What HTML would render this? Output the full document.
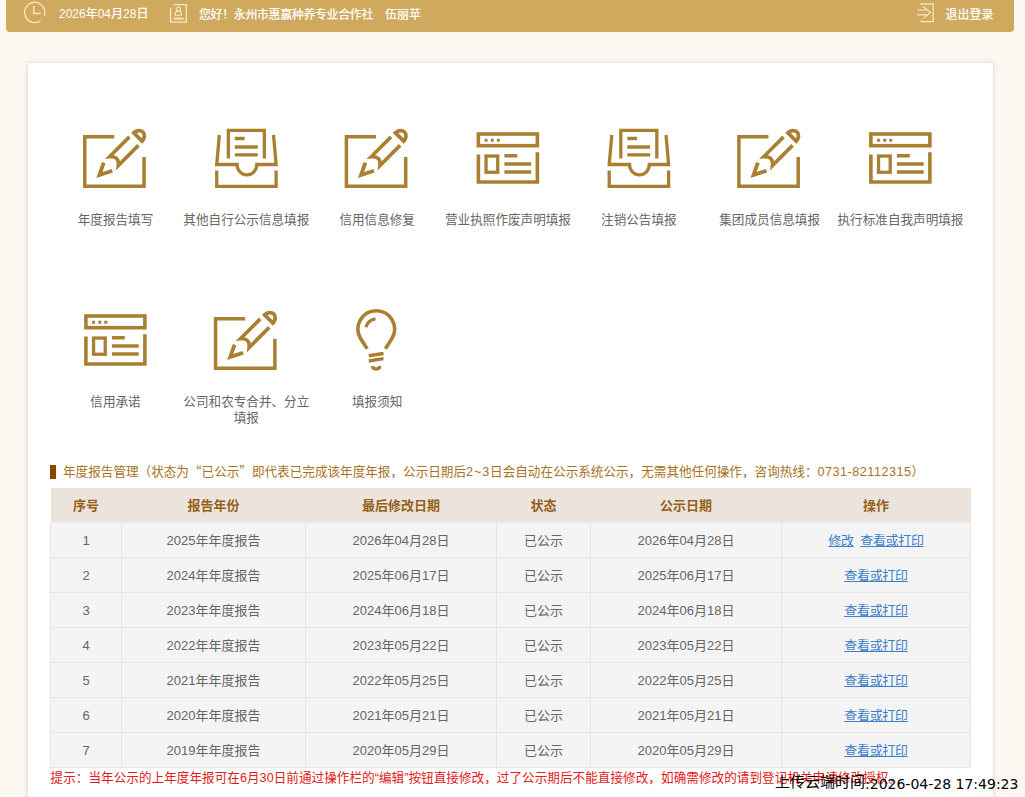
<!DOCTYPE html>
<html lang="zh-CN">
<head>
<meta charset="utf-8">
<title>企业信用信息公示系统</title>
<style>
html,body{margin:0;padding:0;}
body{width:1025px;height:797px;overflow:hidden;position:relative;background:#faf8f0;
 font-family:"Liberation Sans","Noto Sans CJK SC",sans-serif;font-size:13px;color:#666;}
a{color:#3d7fc9;text-decoration:underline;}
.q{font-family:"Noto Sans CJK SC",sans-serif;}
.topbar{position:absolute;left:6px;top:0;width:1008px;height:32px;background:#cfa95e;border-radius:0 0 4px 4px;color:#fff;font-size:12px;line-height:28px;}
.topbar span{position:absolute;top:0;white-space:nowrap;font-weight:500;}
.topbar span.c{top:0.6px;}
.topbar svg{position:absolute;left:0;top:0;}
.card{position:absolute;left:28px;top:63px;width:965px;height:760px;background:#fff;box-shadow:0 0 5px rgba(0,0,0,.16);}
.icons{position:absolute;left:0;top:0;}
.lbl{position:absolute;width:150px;text-align:center;line-height:16px;font-size:12.6px;color:#666;}
.title{position:absolute;left:50px;top:465px;height:14px;line-height:12.5px;border-left:6px solid #8a4500;padding-left:7px;color:#a87220;font-size:12.6px;white-space:nowrap;}
table.grid{position:absolute;left:50px;top:488px;border-collapse:collapse;table-layout:fixed;width:921px;}
table.grid th{height:32px;padding:2px 0 0;vertical-align:middle;line-height:20px;background:#ebe4dd;color:#965f18;font-weight:bold;font-size:13px;}
table.grid td{height:32px;padding:2px 0 0;vertical-align:middle;line-height:20px;background:#f4f4f4;border:1px solid #e5e5e5;text-align:center;font-size:13px;color:#666;}
table.grid tr:nth-child(2) td{border-top-color:#f0ece8;}
table.grid td i{display:inline-block;width:6.5px;}
table.grid td a{letter-spacing:-0.3px;}
.tip{position:absolute;left:50.5px;top:770px;font-size:12.6px;letter-spacing:0.035px;line-height:16px;color:#e02020;white-space:nowrap;}
.stamp{position:absolute;left:775px;top:773px;font-family:"DejaVu Sans","Noto Sans CJK SC",sans-serif;font-size:14px;line-height:20px;color:#000;white-space:nowrap;}
.stamp span{font-size:15px;font-family:"Noto Sans CJK SC",sans-serif;position:relative;top:-1.6px;}
</style>
</head>
<body>
<div class="topbar">
  <svg width="1008" height="32" viewBox="6 0 1008 32" fill="none" stroke="#fbe8c2" stroke-width="1.3">
    <path d="M44.3,15.9 A10.1,10.1 0 1 0 40.6,20.8"/>
    <path d="M33.7,6.1 V13.4 H40.8" stroke-width="1.5"/>
    <path d="M173.8,4.7 H186.3 V22.2 H170.6 V7.9"/>
    <circle cx="178.4" cy="8.9" r="2.1" stroke-width="1.1"/>
    <path d="M175.4,15.2 V13.6 A3,2.6 0 0 1 181.4,13.6 V15.2 Z" stroke-width="1.1"/>
    <rect x="173.7" y="17.3" width="9.7" height="2.5" fill="#f3dcae" stroke="none"/>
    <path d="M921.2,5.2 V3.9 H933.2 V21.7 H921.2 V20.2" stroke-width="1.2"/>
    <path d="M917.2,10 H926.5 M917.2,14.8 H926.5 M923.2,6.8 L930.6,12.5 L923.2,18.4" stroke-width="1.2"/>
  </svg>
  <span style="left:53px">2026年04月28日</span>
  <span class="c" style="left:193px;letter-spacing:-0.4px">您好！永州市惠赢种养专业合作社</span>
  <span class="c" style="left:379px">伍丽苹</span>
  <span class="c" style="left:939.5px">退出登录</span>
</div>
<div class="card"></div>
<svg class="icons" width="1025" height="460" viewBox="0 0 1025 460">
<g transform="translate(83.0,128)" fill="none" stroke="#a98032" stroke-width="3.5" stroke-linecap="butt" stroke-linejoin="miter">
<path d="M31.3,8.85 H1.75 V58.25 H61.05 V28.9"/>
<g transform="translate(13.5,50.4) rotate(-45)" stroke-width="3.6">
<path d="M16.2,-6 L4.4,-0.3 L16.6,5.8" stroke-width="3.8" stroke-miterlimit="10"/>
<path d="M52.6,-6.1 H24.5 Q32,0.3 24.5,6.3 H53"/>
<path d="M58.6,-5.8 V5.8 A7,5.8 0 0 0 58.6,-5.8 Z" stroke-width="3.8"/>
</g>
</g>
<g transform="translate(215.33,128)" fill="none" stroke="#a98032" stroke-width="3.3" stroke-linecap="butt" stroke-linejoin="miter">
<path d="M13,30.4 V2.35 H49 V30.4"/>
<path d="M19.5,10.5 H29.2 M19.5,19 H42.4 M19.5,26.8 H42.4"/>
<path d="M4,7 L1.4,36.5 H21.7 A9.9,10.3 0 0 0 41.5,36.5 H60.8 L58.2,7"/>
<path d="M1.4,42.4 V58.3 H60.8 V42.4"/>
</g>
<g transform="translate(344.66,128)" fill="none" stroke="#a98032" stroke-width="3.5" stroke-linecap="butt" stroke-linejoin="miter">
<path d="M31.3,8.85 H1.75 V58.25 H61.05 V28.9"/>
<g transform="translate(13.5,50.4) rotate(-45)" stroke-width="3.6">
<path d="M16.2,-6 L4.4,-0.3 L16.6,5.8" stroke-width="3.8" stroke-miterlimit="10"/>
<path d="M52.6,-6.1 H24.5 Q32,0.3 24.5,6.3 H53"/>
<path d="M58.6,-5.8 V5.8 A7,5.8 0 0 0 58.6,-5.8 Z" stroke-width="3.8"/>
</g>
</g>
<g transform="translate(476.59,128)" fill="none" stroke="#a98032" stroke-width="3.6" stroke-linecap="butt" stroke-linejoin="miter">
<rect x="1.8" y="6" width="59" height="11.7"/>
<path d="M8,10.8 h3 v3 h-3 z M14.2,10.8 h3 v3 h-3 z M20.2,10.8 h3 v3 h-3 z" fill="#a98032" stroke="none"/>
<path d="M1.8,26.4 V54 H60.8 V24.2"/>
<rect x="9.45" y="28.05" width="11.7" height="16.2" stroke-width="3.3"/>
<path d="M27.8,27.8 H40.7 M27.8,36 H54.6 M27.8,44 H54.6" stroke-width="3.4"/>
</g>
<g transform="translate(607.82,128)" fill="none" stroke="#a98032" stroke-width="3.3" stroke-linecap="butt" stroke-linejoin="miter">
<path d="M13,30.4 V2.35 H49 V30.4"/>
<path d="M19.5,10.5 H29.2 M19.5,19 H42.4 M19.5,26.8 H42.4"/>
<path d="M4,7 L1.4,36.5 H21.7 A9.9,10.3 0 0 0 41.5,36.5 H60.8 L58.2,7"/>
<path d="M1.4,42.4 V58.3 H60.8 V42.4"/>
</g>
<g transform="translate(737.15,128)" fill="none" stroke="#a98032" stroke-width="3.5" stroke-linecap="butt" stroke-linejoin="miter">
<path d="M31.3,8.85 H1.75 V58.25 H61.05 V28.9"/>
<g transform="translate(13.5,50.4) rotate(-45)" stroke-width="3.6">
<path d="M16.2,-6 L4.4,-0.3 L16.6,5.8" stroke-width="3.8" stroke-miterlimit="10"/>
<path d="M52.6,-6.1 H24.5 Q32,0.3 24.5,6.3 H53"/>
<path d="M58.6,-5.8 V5.8 A7,5.8 0 0 0 58.6,-5.8 Z" stroke-width="3.8"/>
</g>
</g>
<g transform="translate(869.08,128)" fill="none" stroke="#a98032" stroke-width="3.6" stroke-linecap="butt" stroke-linejoin="miter">
<rect x="1.8" y="6" width="59" height="11.7"/>
<path d="M8,10.8 h3 v3 h-3 z M14.2,10.8 h3 v3 h-3 z M20.2,10.8 h3 v3 h-3 z" fill="#a98032" stroke="none"/>
<path d="M1.8,26.4 V54 H60.8 V24.2"/>
<rect x="9.45" y="28.05" width="11.7" height="16.2" stroke-width="3.3"/>
<path d="M27.8,27.8 H40.7 M27.8,36 H54.6 M27.8,44 H54.6" stroke-width="3.4"/>
</g>
<g transform="translate(84.1,310)" fill="none" stroke="#a98032" stroke-width="3.6" stroke-linecap="butt" stroke-linejoin="miter">
<rect x="1.8" y="6" width="59" height="11.7"/>
<path d="M8,10.8 h3 v3 h-3 z M14.2,10.8 h3 v3 h-3 z M20.2,10.8 h3 v3 h-3 z" fill="#a98032" stroke="none"/>
<path d="M1.8,26.4 V54 H60.8 V24.2"/>
<rect x="9.45" y="28.05" width="11.7" height="16.2" stroke-width="3.3"/>
<path d="M27.8,27.8 H40.7 M27.8,36 H54.6 M27.8,44 H54.6" stroke-width="3.4"/>
</g>
<g transform="translate(213.83,310)" fill="none" stroke="#a98032" stroke-width="3.5" stroke-linecap="butt" stroke-linejoin="miter">
<path d="M31.3,8.85 H1.75 V58.25 H61.05 V28.9"/>
<g transform="translate(13.5,50.4) rotate(-45)" stroke-width="3.6">
<path d="M16.2,-6 L4.4,-0.3 L16.6,5.8" stroke-width="3.8" stroke-miterlimit="10"/>
<path d="M52.6,-6.1 H24.5 Q32,0.3 24.5,6.3 H53"/>
<path d="M58.6,-5.8 V5.8 A7,5.8 0 0 0 58.6,-5.8 Z" stroke-width="3.8"/>
</g>
</g>
<g transform="translate(344.66,310)" fill="none" stroke="#a98032" stroke-width="3.6" stroke-linecap="butt" stroke-linejoin="round">
<path d="M22.5,38.7 L15.75,28.25 A18.3,18.3 0 1 1 47.45,28.25 L40.7,38.7"/>
<path d="M21.3,17.3 A10.4,10.4 0 0 1 30.9,8.8" stroke-width="3.3"/>
<path d="M24.1,45.7 L38.9,43.5 M24.1,51 L38.9,48.6" stroke-width="3.4"/>
<path d="M27.9,56 Q27.9,59 31.5,59 Q35.1,59 35.1,56" stroke-width="3.3"/>
</g>
</svg>
<div class="lbl" style="left:40.5px;top:212px">年度报告填写</div>
<div class="lbl" style="left:171.33px;top:212px">其他自行公示信息填报</div>
<div class="lbl" style="left:302.16px;top:212px">信用信息修复</div>
<div class="lbl" style="left:432.99px;top:212px">营业执照作废声明填报</div>
<div class="lbl" style="left:563.82px;top:212px">注销公告填报</div>
<div class="lbl" style="left:694.65px;top:212px">集团成员信息填报</div>
<div class="lbl" style="left:825.48px;top:212px">执行标准自我声明填报</div>
<div class="lbl" style="left:40.5px;top:394px">信用承诺</div>
<div class="lbl" style="left:171.33px;top:394px">公司和农专合并、分立<br>填报</div>
<div class="lbl" style="left:302.16px;top:394px">填报须知</div>

<div class="title">年度报告管理（状态为<span class="q">“</span>已公示<span class="q">”</span>即代表已完成该年度年报，公示日期后<span style="letter-spacing:0.9px">2~3</span>日会自动在公示系统公示，无需其他任何操作，咨询热线：<span style="letter-spacing:0.52px">0731-82112315</span>）</div>

<table class="grid">
<colgroup><col style="width:71px"><col style="width:184px"><col style="width:191px"><col style="width:94px"><col style="width:191px"><col style="width:189px"></colgroup>
<tr><th>序号</th><th>报告年份</th><th>最后修改日期</th><th>状态</th><th>公示日期</th><th>操作</th></tr>
<tr><td>1</td><td>2025年年度报告</td><td>2026年04月28日</td><td>已公示</td><td>2026年04月28日</td><td><a>修改</a><i></i><a>查看或打印</a></td></tr>
<tr><td>2</td><td>2024年年度报告</td><td>2025年06月17日</td><td>已公示</td><td>2025年06月17日</td><td><a>查看或打印</a></td></tr>
<tr><td>3</td><td>2023年年度报告</td><td>2024年06月18日</td><td>已公示</td><td>2024年06月18日</td><td><a>查看或打印</a></td></tr>
<tr><td>4</td><td>2022年年度报告</td><td>2023年05月22日</td><td>已公示</td><td>2023年05月22日</td><td><a>查看或打印</a></td></tr>
<tr><td>5</td><td>2021年年度报告</td><td>2022年05月25日</td><td>已公示</td><td>2022年05月25日</td><td><a>查看或打印</a></td></tr>
<tr><td>6</td><td>2020年年度报告</td><td>2021年05月21日</td><td>已公示</td><td>2021年05月21日</td><td><a>查看或打印</a></td></tr>
<tr><td>7</td><td>2019年年度报告</td><td>2020年05月29日</td><td>已公示</td><td>2020年05月29日</td><td><a>查看或打印</a></td></tr>
</table>

<div class="tip">提示：当年公示的上年度年报可在6月30日前通过操作栏的“编辑”按钮直接修改，过了公示期后不能直接修改，如确需修改的请到登记机关申请修改授权。</div>
<div class="stamp"><span>上传云端时间</span>:2026-04-28 17:49:23</div>
</body>
</html>
